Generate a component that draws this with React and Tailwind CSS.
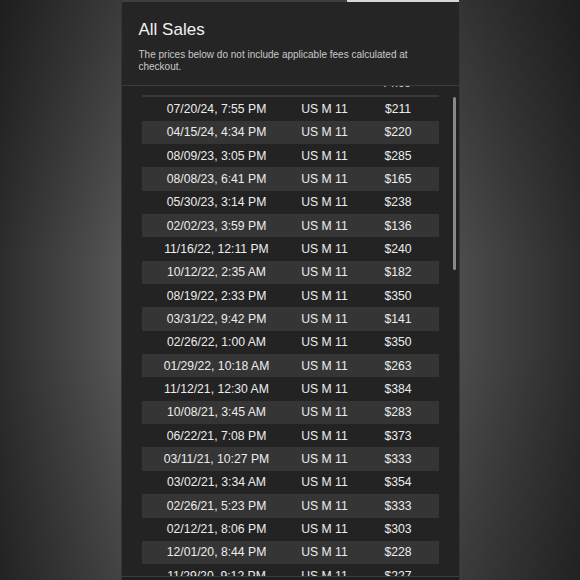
import React from 'react'

const sales = [
    ['07/20/24, 7:55 PM', '$211'],
    ['04/15/24, 4:34 PM', '$220'],
    ['08/09/23, 3:05 PM', '$285'],
    ['08/08/23, 6:41 PM', '$165'],
    ['05/30/23, 3:14 PM', '$238'],
    ['02/02/23, 3:59 PM', '$136'],
    ['11/16/22, 12:11 PM', '$240'],
    ['10/12/22, 2:35 AM', '$182'],
    ['08/19/22, 2:33 PM', '$350'],
    ['03/31/22, 9:42 PM', '$141'],
    ['02/26/22, 1:00 AM', '$350'],
    ['01/29/22, 10:18 AM', '$263'],
    ['11/12/21, 12:30 AM', '$384'],
    ['10/08/21, 3:45 AM', '$283'],
    ['06/22/21, 7:08 PM', '$373'],
    ['03/11/21, 10:27 PM', '$333'],
    ['03/02/21, 3:34 AM', '$354'],
    ['02/26/21, 5:23 PM', '$333'],
    ['02/12/21, 8:06 PM', '$303'],
    ['12/01/20, 8:44 PM', '$228'],
    ['11/29/20, 9:12 PM', '$227'],
    ['11/20/20, 4:51 PM', '$241'],
]

const App = () => {
  return (
    <div
      className="h-[580px] w-[580px] overflow-hidden bg-[linear-gradient(to_bottom,rgba(0,0,0,0.32),rgba(0,0,0,0)_45%,rgba(0,0,0,0)_60%,rgba(0,0,0,0.22)),linear-gradient(to_right,#2c2c2c,#565656_21%,#4c4c4c_79%,#2b2b2b)]"
      style={{fontFamily: '"Liberation Sans", Arial, sans-serif'}}
    >
        <section className="mx-auto flex h-full w-[339px] flex-col border-x border-[#353535] bg-[#232323]">
            <div className="flex h-[2px]">
                <div className="flex-1 bg-[#3e3e3e]"></div>
                <div className="w-[112px] bg-[#d8d8d8]"></div>
            </div>

            <div className="h-[84px] border-b border-[#3b3b3b] bg-[#252525] pl-[17px] pt-[18px]">
                <h1 className="text-[17px] leading-[20px] text-[#f2f2f2]">All Sales</h1>
                <p className="mt-[9px] w-[300px] text-[10px] leading-[11.7px] text-[#c9c9c9]">
                    The prices below do not include applicable fees calculated at checkout.
                </p>
            </div>

            <div className="relative flex-1 overflow-hidden">
                <div className="mx-[20px] -mt-[12.7px]">
                    <div className="grid h-[24px] grid-cols-[149px_65px_1fr] items-start border-b-2 border-[#383838] pt-[1px] text-[12px] text-[#cfcfcf]">
                        <span></span>
                        <span></span>
                        <span className="text-center">Price</span>
                    </div>
                    {
                        sales.map(([date, price], i) => (
                            <div
                                key={i}
                                className={`grid h-[23.35px] grid-cols-[150px_66px_1fr] items-center text-[12.2px] text-[#ececec] ${i % 2 === 1 ? 'bg-[#353535]' : ''}`}
                            >
                                <span className="text-center">{date}</span>
                                <span className="text-center">US M 11</span>
                                <span className="text-center">{price}</span>
                            </div>
                        ))
                    }
                </div>
                <div className="absolute right-[3px] top-[11px] h-[173px] w-[3px] rounded-full bg-[#8a8a8a]"></div>
            </div>

            <div className="h-[4px] border-t border-[#3b3b3b] bg-[#1e1e1e]"></div>
        </section>
    </div>
  )
}

export default App
